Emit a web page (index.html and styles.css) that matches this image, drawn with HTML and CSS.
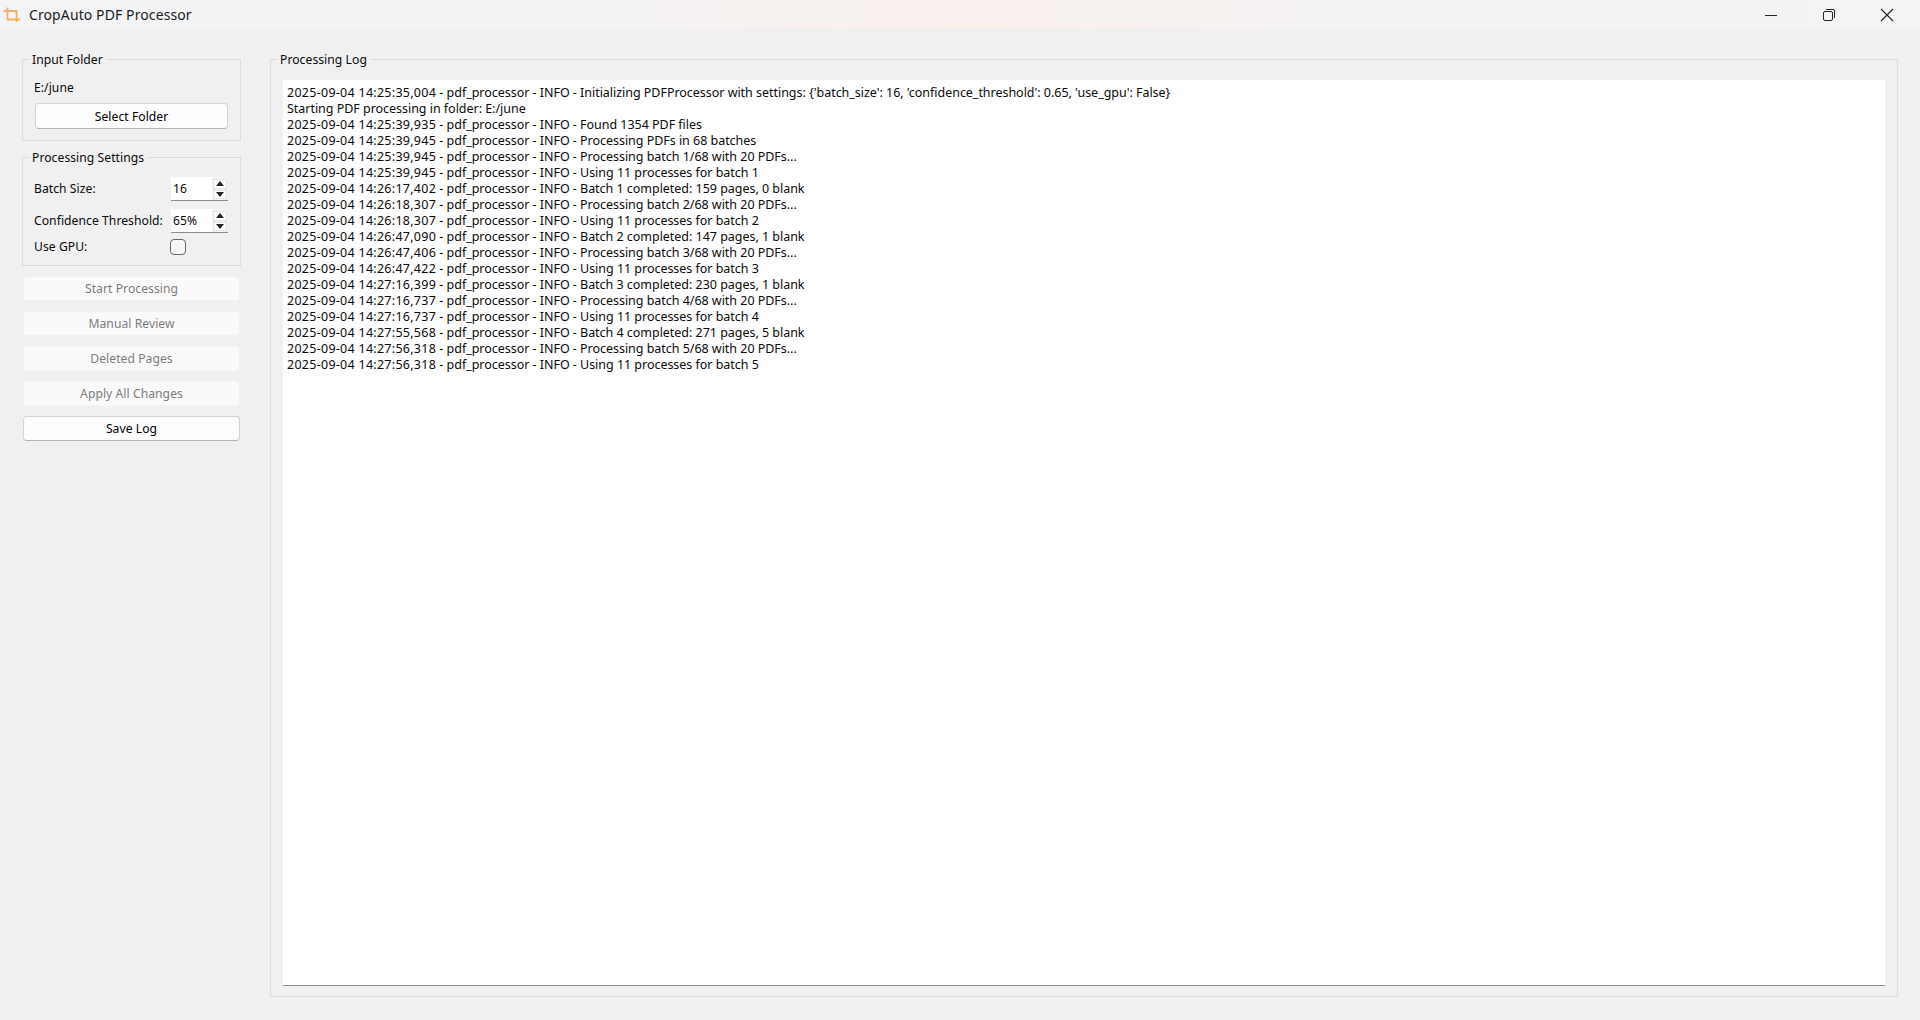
FILE: index.html
```html
<!DOCTYPE html>
<html lang="en">
<head>
<meta charset="utf-8">
<title>CropAuto PDF Processor</title>
<link rel="stylesheet" href="styles.css">
</head>
<body>
<header class="titlebar">
  <svg class="app-icon" width="18" height="18" viewBox="0 0 18 18" fill="none">
    <defs><linearGradient id="crop" x1="0" y1="0" x2="1" y2="1"><stop offset="0" stop-color="#f7a78f"/><stop offset="1" stop-color="#f9b53f"/></linearGradient></defs>
    <path d="M4.5 1.5V13.5H17M0.5 5H13.5V16" stroke="url(#crop)" stroke-width="1.8"/>
  </svg>
  <span class="app-title">CropAuto PDF Processor</span>
  <div class="win-controls">
    <svg class="win-btn" width="14" height="14" viewBox="0 0 14 14" fill="none"><path d="M1 7.5H13" stroke="#222" stroke-width="1"/></svg>
    <svg class="win-btn" width="14" height="14" viewBox="0 0 14 14" fill="none"><rect x="1.5" y="3.5" width="9" height="9" rx="1.5" stroke="#222"/><path d="M4 1.5H11A1.5 1.5 0 0 1 12.5 3V10" stroke="#222"/></svg>
    <svg class="win-btn" width="14" height="14" viewBox="0 0 14 14" fill="none"><path d="M1 1L13 13M13 1L1 13" stroke="#222" stroke-width="1.1"/></svg>
  </div>
</header>
<main class="layout">
  <aside class="sidebar">
    <fieldset class="group folder-group">
      <legend>Input Folder</legend>
      <div class="group-body">
        <div class="folder-path">E:/june</div>
        <button class="btn select-btn" type="button">Select Folder</button>
      </div>
    </fieldset>
    <fieldset class="group settings-group">
      <legend>Processing Settings</legend>
      <div class="group-body settings-body">
        <div class="setting">
          <span class="setting-label">Batch Size:</span>
          <div class="spin"><span class="spin-value">16</span><div class="spin-arrows"><span class="arrow"><svg width="8" height="5" viewBox="0 0 8 5"><path d="M4 0L8 5H0Z" fill="#222"/></svg></span><span class="arrow"><svg width="8" height="5" viewBox="0 0 8 5"><path d="M0 0H8L4 5Z" fill="#222"/></svg></span></div></div>
        </div>
        <div class="setting">
          <span class="setting-label">Confidence Threshold:</span>
          <div class="spin"><span class="spin-value">65%</span><div class="spin-arrows"><span class="arrow"><svg width="8" height="5" viewBox="0 0 8 5"><path d="M4 0L8 5H0Z" fill="#222"/></svg></span><span class="arrow"><svg width="8" height="5" viewBox="0 0 8 5"><path d="M0 0H8L4 5Z" fill="#222"/></svg></span></div></div>
        </div>
        <div class="setting setting-check">
          <span class="setting-label">Use GPU:</span>
          <span class="check"></span>
        </div>
      </div>
    </fieldset>
    <div class="actions">
      <button class="btn action" type="button" disabled>Start Processing</button>
      <button class="btn action" type="button" disabled>Manual Review</button>
      <button class="btn action" type="button" disabled>Deleted Pages</button>
      <button class="btn action" type="button" disabled>Apply All Changes</button>
      <button class="btn action" type="button">Save Log</button>
    </div>
  </aside>
  <fieldset class="group log-group">
    <legend>Processing Log</legend>
    <div class="log">
      <div><span class="ts">2025-09-04 14:25:35,004</span> - pdf_processor - INFO - Initializing PDFProcessor with settings: {'batch_size': 16, 'confidence_threshold': 0.65, 'use_gpu': False}</div>
      <div>Starting PDF processing in folder: E:/june</div>
      <div><span class="ts">2025-09-04 14:25:39,935</span> - pdf_processor - INFO - Found 1354 PDF files</div>
      <div><span class="ts">2025-09-04 14:25:39,945</span> - pdf_processor - INFO - Processing PDFs in 68 batches</div>
      <div><span class="ts">2025-09-04 14:25:39,945</span> - pdf_processor - INFO - Processing batch 1/68 with 20 PDFs...</div>
      <div><span class="ts">2025-09-04 14:25:39,945</span> - pdf_processor - INFO - Using 11 processes for batch 1</div>
      <div><span class="ts">2025-09-04 14:26:17,402</span> - pdf_processor - INFO - Batch 1 completed: 159 pages, 0 blank</div>
      <div><span class="ts">2025-09-04 14:26:18,307</span> - pdf_processor - INFO - Processing batch 2/68 with 20 PDFs...</div>
      <div><span class="ts">2025-09-04 14:26:18,307</span> - pdf_processor - INFO - Using 11 processes for batch 2</div>
      <div><span class="ts">2025-09-04 14:26:47,090</span> - pdf_processor - INFO - Batch 2 completed: 147 pages, 1 blank</div>
      <div><span class="ts">2025-09-04 14:26:47,406</span> - pdf_processor - INFO - Processing batch 3/68 with 20 PDFs...</div>
      <div><span class="ts">2025-09-04 14:26:47,422</span> - pdf_processor - INFO - Using 11 processes for batch 3</div>
      <div><span class="ts">2025-09-04 14:27:16,399</span> - pdf_processor - INFO - Batch 3 completed: 230 pages, 1 blank</div>
      <div><span class="ts">2025-09-04 14:27:16,737</span> - pdf_processor - INFO - Processing batch 4/68 with 20 PDFs...</div>
      <div><span class="ts">2025-09-04 14:27:16,737</span> - pdf_processor - INFO - Using 11 processes for batch 4</div>
      <div><span class="ts">2025-09-04 14:27:55,568</span> - pdf_processor - INFO - Batch 4 completed: 271 pages, 5 blank</div>
      <div><span class="ts">2025-09-04 14:27:56,318</span> - pdf_processor - INFO - Processing batch 5/68 with 20 PDFs...</div>
      <div><span class="ts">2025-09-04 14:27:56,318</span> - pdf_processor - INFO - Using 11 processes for batch 5</div>
    </div>
  </fieldset>
</main>
</body>
</html>
```
FILE: styles.css
```css
* { box-sizing: border-box; }
html, body { margin: 0; height: 100%; }
body {
  background: #f0f0f0;
  color: #0a0a0a;
  font: 12.15px/16px "Noto Sans", sans-serif;
  letter-spacing: 0.05px;
  overflow: hidden;
}
.titlebar {
  height: 29px;
  display: flex;
  align-items: center;
  padding-left: 3px;
  background: linear-gradient(90deg, #f3f4f6 0%, #f4f3f3 30%, #f8f0ed 50%, #f4f3f3 72%, #f3f4f6 100%);
}
.app-icon { margin-right: 8px; }
.app-title { font-size: 14px; color: #1c1c1c; letter-spacing: 0.1px; }
.win-controls { margin-left: auto; display: flex; gap: 44px; padding-right: 26px; }
.win-btn { display: block; }
.layout {
  display: flex;
  gap: 29px;
  padding: 21px 22px 0;
  height: 968px;
}
.sidebar { width: 219px; flex: none; display: flex; flex-direction: column; }
.group {
  margin: 0;
  min-width: 0;
  border: 1px solid #dcdcdc;
  padding: 0;
}
.group legend { margin-left: 7px; padding: 2px 3px 0 2px; line-height: 16px; }
.group-body { padding: 0 12px 0 11px; }
.folder-group { height: 91px; }
.folder-group .group-body { padding-top: 10px; }
.folder-path { height: 20px; line-height: 20px; }
.btn {
  display: block;
  font: inherit;
  letter-spacing: inherit;
  color: #000;
  background: #fdfdfd;
  border: 1px solid #d4d4d4;
  border-bottom-color: #b4b4b4;
  border-radius: 4px;
  padding: 0;
}
.btn:disabled {
  color: #7d7d7d;
  background: #fafafa;
  border-color: #f2f2f2;
}
.select-btn { width: 193px; height: 26px; margin: 5px 0 0 1px; padding-top: 1px; }
.settings-group { height: 118px; margin-top: 7px; }
.settings-body { padding-top: 11px; }
.setting { display: flex; align-items: center; justify-content: space-between; height: 24px; margin-bottom: 8px; }
.setting-check { height: 16px; margin-top: -2px; margin-bottom: 0; }
.spin {
  width: 57px;
  height: 24px;
  background: #fff;
  border-bottom: 1px solid #8c8c8c;
  display: flex;
  justify-content: space-between;
  padding-left: 2px;
}
.spin-value { line-height: 24px; }
.spin-arrows {
  width: 16px;
  background: #f3f3f3;
  padding: 2px 1px 1px;
  display: flex;
  flex-direction: column;
  gap: 1px;
}
.arrow {
  height: 9px;
  background: #fdfdfd;
  border: 1px solid #e2e2e2;
  display: flex;
  align-items: center;
  justify-content: center;
  flex: 1;
}
.arrow svg { display: block; }
.check {
  width: 16px;
  height: 16px;
  margin-right: 42px;
  background: #f6f6f6;
  border: 1px solid #666;
  border-radius: 4px;
}
.actions { display: flex; flex-direction: column; gap: 10px; margin-top: 10px; padding: 0 1px; }
.action { width: 217px; height: 25px; }
.log-group { width: 1628px; height: 947px; }
.log {
  height: 906px;
  margin: 12px 12px 0;
  background: #fff;
  border-bottom: 1px solid #8a8a8a;
  padding: 5px 4px;
  white-space: nowrap;
  font-size: 12.5px;
  letter-spacing: -0.03px;
}
.ts { letter-spacing: 0.27px; }
```
